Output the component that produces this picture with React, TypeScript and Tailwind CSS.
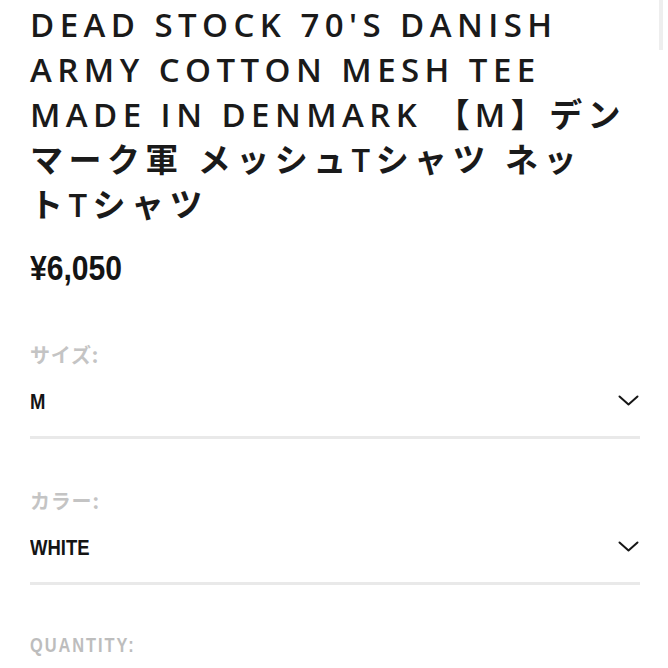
const sans = "\"Open Sans\", \"Noto Sans CJK JP\", sans-serif";
const cjk = "\"Noto Sans CJK JP\", sans-serif";
const bold = "\"Liberation Sans\", \"Noto Sans CJK JP\", sans-serif";

function Chevron() {
  return (
    <svg width="21" height="11" viewBox="0 0 21 11" fill="none" className="mr-[1px] -translate-y-[2px]">
      <polyline points="1.5,1.5 10.5,9.5 19.5,1.5" stroke="#161616" strokeWidth="2" strokeLinecap="round" strokeLinejoin="round" />
    </svg>
  );
}

function Select({ label, value }: { label: string; value: string }) {
  return (
    <div className="flex flex-col">
      <div
        className="text-[20px] font-bold leading-[24px] tracking-[0.04em] text-[#c4c4c4]"
        style={{ fontFamily: cjk }}
      >
        {label}
      </div>
      <div className="mt-[23px] flex items-center justify-between">
        <span
          className="inline-block origin-left scale-x-[0.84] text-[22px] font-bold leading-[24px] text-[#141414]"
          style={{ fontFamily: bold }}
        >
          {value}
        </span>
        <Chevron />
      </div>
      <div className="mt-[22px] h-[3px] bg-[#e9e9e9]" />
    </div>
  );
}

export default function App() {
  return (
    <div className="relative h-[668px] w-[668px] overflow-hidden bg-white">
      <div className="absolute right-[5px] top-0 h-[50px] w-[4px] bg-[#eeeeee]" />
      <div className="pl-[30px] pr-[28px]">
        <h1
          className="whitespace-nowrap pt-[2px] text-[33px] font-semibold leading-[45px] tracking-[0.165em] text-[#1a1a1a]"
          style={{ fontFamily: sans }}
        >
          DEAD STOCK 70'S DANISH
          <br />
          ARMY COTTON MESH TEE
          <br />
          MADE IN DENMARK 【M】デン
          <br />
          マーク軍 メッシュTシャツ ネッ
          <br />
          トTシャツ
        </h1>
        <div className="mt-[21px] leading-[40px]">
          <span
            className="inline-block origin-left scale-x-[0.86] text-[35px] font-bold text-[#141414]"
            style={{ fontFamily: bold }}
          >
            ¥6,050
          </span>
        </div>
        <div className="mt-[49px] flex flex-col gap-[50px]">
          <Select label="サイズ:" value="M" />
          <Select label="カラー:" value="WHITE" />
        </div>
        <div className="mt-[48px] leading-[24px]">
          <span
            className="inline-block origin-left scale-x-[0.78] text-[21px] font-bold tracking-[0.12em] text-[#bdbdbd]"
            style={{ fontFamily: bold }}
          >
            QUANTITY:
          </span>
        </div>
      </div>
    </div>
  );
}
